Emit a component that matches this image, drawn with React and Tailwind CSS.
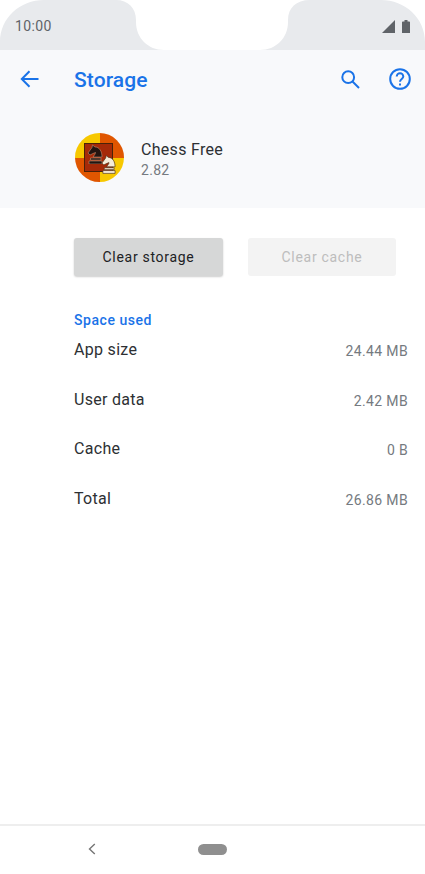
import React from 'react';

const rows = [
  { label: 'App size', value: '24.44 MB' },
  { label: 'User data', value: '2.42 MB' },
  { label: 'Cache', value: '0 B' },
  { label: 'Total', value: '26.86 MB' },
];

const StatusBar = () => (
  <div className="relative h-[50px] bg-white">
    {/* gray bar with the notch cut out */}
    <svg className="absolute inset-0" width="425" height="50" viewBox="0 0 425 50">
      <path
        d="M0 50 V42 C0 18 20 0 44 0 H116 C128 0 136 8 136 20 V22 C136 38 148 50 164 50 H260 C276 50 288 38 288 22 V20 C288 8 296 0 310 0 H381 C405 0 425 18 425 42 V50 Z"
        fill="#e8eaed"
      />
    </svg>
    <div className="relative flex h-full items-center justify-between pl-[15px] pr-[15px] pt-[2px]">
      <span className="text-[14px] tracking-[0.4px] text-[#5f6368]">10:00</span>
      <div className="flex items-center gap-[7px]">
        <svg width="13" height="13" viewBox="0 0 13 13"><path d="M13 0 V13 H0 Z" fill="#5f6368" /></svg>
        <svg width="8" height="13" viewBox="0 0 8 13"><path d="M2.5 0 H5.5 V1.5 H7.2 A.8 .8 0 0 1 8 2.3 V13 H0 V2.3 A.8 .8 0 0 1 .8 1.5 H2.5 Z" fill="#5f6368" /></svg>
      </div>
    </div>
  </div>
);

const AppBar = () => (
  <div className="flex h-[58px] items-center pl-[20px] pr-[14px] text-[#1a73e8]">
    <svg width="19" height="18" viewBox="0 0 19 18" fill="none" stroke="currentColor" strokeWidth="2">
      <path d="M18.5 9 H2" />
      <path d="M9.5 1.2 L1.8 9 L9.5 16.8" />
    </svg>
    <h1 className="ml-[35px] mt-[2px] text-[21px] font-medium leading-none tracking-[0.1px]">Storage</h1>
    <div className="ml-auto flex items-center gap-[29px]">
      <svg width="19" height="19" viewBox="0 0 19 19" fill="none" stroke="currentColor" strokeWidth="2">
        <circle cx="7.2" cy="7.2" r="5.9" />
        <path d="M11.5 11.5 L18 18" />
      </svg>
      <svg width="22" height="22" viewBox="0 0 22 22" fill="none" stroke="currentColor" strokeWidth="2">
        <circle cx="11" cy="11" r="9.8" />
        <path d="M7.7 8.6 A3.3 3.3 0 0 1 14.3 8.6 C14.3 11 11 11 11 13.8" />
        <path d="M11 15.4 V17.4" />
      </svg>
    </div>
  </div>
);

const knight = "M3 11 L1 9 L5 3.5 L5.5 1 L8 3 C12.5 3 15 7.5 15 13 H6 C7 11.5 8.5 10 8.5 8.5 C6.5 9 5 10 3 11 Z M3.5 14 H14 V16 H3.5 Z M2 17 H15 V20 H2 Z";

const ChessIcon = () => (
  <div className="relative h-[49px] w-[49px] overflow-hidden rounded-full">
    <div className="grid h-full w-full grid-cols-2 grid-rows-2">
      <div className="bg-[#f7c800]" />
      <div className="bg-[#e05600]" />
      <div className="bg-[#e05600]" />
      <div className="bg-[#f7c800]" />
    </div>
    <div className="absolute left-[9px] top-[10px] h-[29px] w-[29px] border border-[#4a2208] bg-[#a52a08]" />
    <svg className="absolute left-[12px] top-[11px]" width="16" height="20" viewBox="0 0 16 20">
      <path d={knight} fill="#241510" stroke="#c9a98a" strokeWidth="0.5" />
    </svg>
    <svg className="absolute left-[26px] top-[21px]" width="15" height="20" viewBox="0 0 16 20">
      <path d={knight} fill="#f5ecd8" stroke="#4a3018" strokeWidth="0.7" />
    </svg>
  </div>
);

export default function App() {
  return (
    <div className="flex h-[874px] w-[425px] flex-col overflow-hidden bg-white font-['Roboto',sans-serif]">
      <StatusBar />
      <div className="h-[158px] bg-[#f8f9fb]">
        <AppBar />
        <div className="ml-[75px] mt-[25px] flex items-center gap-[17px]">
          <ChessIcon />
          <div className="pt-[3px]">
            <p className="text-[16px] leading-[21px] tracking-[0.3px] text-[#2d3033]">Chess Free</p>
            <p className="text-[14px] leading-[20px] tracking-[0.3px] text-[#757a80]">2.82</p>
          </div>
        </div>
      </div>

      <div className="ml-[74px] mt-[30px] flex gap-[25px]">
        <button className="h-[38px] w-[149px] rounded-[3px] bg-[#d6d7d7] text-[14px] font-[450] tracking-[0.7px] text-[#202124] shadow-[0_1px_2px_rgba(0,0,0,0.2)]">
          Clear storage
        </button>
        <button className="h-[38px] w-[148px] rounded-[3px] bg-[#f3f3f3] text-[14px] font-[450] tracking-[0.7px] text-[#bdbdbd]">
          Clear cache
        </button>
      </div>

      <div className="ml-[74px] mr-[17px] mt-[34px]">
        <h2 className="text-[14px] font-medium leading-[20px] tracking-[0.55px] text-[#1a73e8]">Space used</h2>
        <div className="mt-[8px] flex flex-col">
          {rows.map(r => (
            <div key={r.label} className="flex h-[49.5px] items-start justify-between">
              <span className="text-[16px] leading-[24px] tracking-[0.3px] text-[#2d3033]">{r.label}</span>
              <span className="pt-[1px] text-[14px] leading-[24px] tracking-[0.35px] text-[#757a80]">{r.value}</span>
            </div>
          ))}
        </div>
      </div>

      <div className="mt-auto flex h-[50px] items-center border-t-2 border-[#eeeeee] pb-[2px]">
        <svg className="ml-[88px]" width="8" height="12" viewBox="0 0 8 12" fill="none" stroke="#757575" strokeWidth="1.4">
          <path d="M6.8 1 L1.5 6 L6.8 11" />
        </svg>
        <div className="ml-[102px] h-[11px] w-[29px] rounded-full bg-[#8f8f8f]" />
      </div>
    </div>
  );
}
